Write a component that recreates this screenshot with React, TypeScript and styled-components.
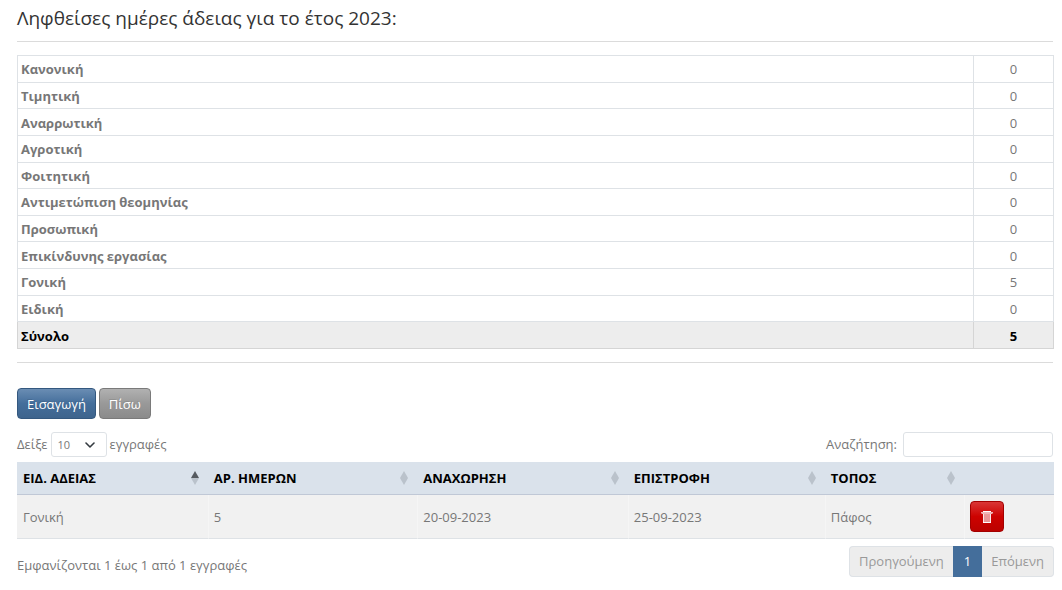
import React, { useState } from 'react';
import styled, { createGlobalStyle } from 'styled-components';

const GlobalStyle = createGlobalStyle`
  *, *::before, *::after { box-sizing: border-box; }
  body {
    margin: 0;
    background: #fff;
    color: #777;
    font: 13px/20px "Open Sans", "Noto Sans", sans-serif;
  }
  button, input, select { font: inherit; }
`;

const Page = styled.main`
  padding: 5px 8px 12px 17px;
`;

const Title = styled.h1`
  margin: 0;
  color: #333;
  font-size: 19px;
  font-weight: 400;
  line-height: 26px;
`;

const Divider = styled.hr<{ $top: number }>`
  margin: ${(p) => p.$top}px 1px 13px 0;
  border: 0;
  border-top: 1px solid #dbdbdb;
`;

const SummaryTable = styled.table`
  width: 100%;
  height: 294px;
  border-collapse: collapse;
`;

const SummaryRow = styled.tr<{ $total?: boolean }>`
  background: ${(p) => (p.$total ? '#ededed' : '#fff')};
  color: ${(p) => (p.$total ? '#000' : '#777')};
  font-weight: ${(p) => (p.$total ? 700 : 400)};

  th, td {
    padding: 4px 3px 3px;
    border: 1px solid ${(p) => (p.$total ? '#d5d5d5' : '#dee2e6')};
    line-height: 18px;
  }
  th { text-align: left; font-weight: 700; }
  td { width: 80px; text-align: center; }
`;

const Actions = styled.div`
  display: flex;
  gap: 3px;
  margin-top: 25px;
`;

const tones = {
  primary: { border: '#34587f', fill: 'linear-gradient(180deg, #6a8db3 0%, #446e9b 50%, #3e648d 100%)' },
  muted: { border: '#7a7a7a', fill: 'linear-gradient(180deg, #b1b1b1 0%, #999 50%, #8b8b8b 100%)' },
  danger: { border: '#a30000', fill: 'linear-gradient(180deg, #d93636 0%, #cd0200 50%, #bb0200 100%)' },
};

const Button = styled.button<{ $tone: keyof typeof tones; $icon?: boolean }>`
  display: inline-flex;
  align-items: center;
  justify-content: center;
  height: 31px;
  padding: 0 ${(p) => (p.$icon ? 10 : 9)}px;
  border: 1px solid ${(p) => tones[p.$tone].border};
  border-radius: 4px;
  background: ${(p) => tones[p.$tone].fill};
  color: #fff;
  text-shadow: -1px -1px 0 rgba(0, 0, 0, 0.1);
  cursor: pointer;
`;

const Controls = styled.div`
  display: flex;
  justify-content: space-between;
  margin: 13px 1px 5px 0;
`;

const ControlLabel = styled.label<{ $gap: number }>`
  display: flex;
  align-items: center;
  gap: ${(p) => p.$gap}px;
  line-height: 19px;
`;

const SelectWrap = styled.span`
  display: grid;
  align-items: center;
  justify-items: end;

  > * { grid-area: 1 / 1; }
  svg { margin-right: 12px; pointer-events: none; }
`;

const LengthSelect = styled.select`
  width: 56px;
  height: 25px;
  padding: 0 6px;
  border: 1px solid #dee2e6;
  border-radius: 3px;
  background: #fff;
  color: #777;
  font-size: 11px;
  appearance: none;
`;

const SearchInput = styled.input`
  width: 150px;
  height: 25px;
  padding: 0 7px;
  border: 1px solid #dee2e6;
  border-radius: 3px;
  color: #777;
`;

const DataTable = styled.table`
  width: 100%;
  border-collapse: separate;
  border-spacing: 0;
  table-layout: fixed;

  th {
    height: 33px;
    padding: 0 6px;
    border-bottom: 1px solid #c0c8d6;
    background: #dae2eb;
    color: #000;
    text-align: left;
  }
  td {
    height: 44px;
    padding: 0 6px;
    border-bottom: 1px solid #dee2e6;
    background: #f1f1f1;
  }
  td + td { border-left: 1px solid #f5f5f5; padding-left: 5px; }
`;

const HeadContent = styled.span`
  display: flex;
  align-items: center;
  justify-content: space-between;
  padding-right: 3px;
`;

const Footer = styled.div`
  display: flex;
  justify-content: space-between;
  margin-top: 7px;
`;

const Info = styled.div`
  padding-top: 9px;
`;

const Pagination = styled.nav`
  display: flex;
`;

const PageButton = styled.button<{ $active?: boolean }>`
  height: 31px;
  padding: 0 ${(p) => (p.$active ? 10 : 9)}px 2px;
  border: 1px solid ${(p) => (p.$active ? '#446e9b' : '#dee2e6')};
  background: ${(p) => (p.$active ? '#446e9b' : '#ededed')};
  color: ${(p) => (p.$active ? '#fff' : '#999')};

  &:first-child { border-right: 0; border-radius: 4px 0 0 4px; }
  &:last-child { border-left: 0; border-radius: 0 4px 4px 0; }
`;

const leaves: [string, number][] = [
  ['Κανονική', 0],
  ['Τιμητική', 0],
  ['Αναρρωτική', 0],
  ['Αγροτική', 0],
  ['Φοιτητική', 0],
  ['Αντιμετώπιση θεομηνίας', 0],
  ['Προσωπική', 0],
  ['Επικίνδυνης εργασίας', 0],
  ['Γονική', 5],
  ['Ειδική', 0],
];

const columns = [
  { label: 'ΕΙΔ. ΑΔΕΙΑΣ', width: '18.4%' },
  { label: 'ΑΡ. ΗΜΕΡΩΝ', width: '20.2%' },
  { label: 'ΑΝΑΧΩΡΗΣΗ', width: '20.3%' },
  { label: 'ΕΠΙΣΤΡΟΦΗ', width: '19%' },
  { label: 'ΤΟΠΟΣ', width: '13.4%' },
  { label: '', width: '8.7%' },
];

const SortIcon = ({ ascending }: { ascending: boolean }) => (
  <svg width="8" height="14" viewBox="0 0 8 14" aria-hidden="true">
    <path d="M4 0 8 7H0z" fill={ascending ? '#555a60' : '#bac2cb'} />
    <path d="M0 7h8l-4 7z" fill="#bac2cb" />
  </svg>
);

const Chevron = () => (
  <svg width="10" height="6" viewBox="0 0 10 6" fill="none" aria-hidden="true">
    <path d="m1 1 4 4 4-4" stroke="#343a40" strokeWidth="1.6" strokeLinecap="round" strokeLinejoin="round" />
  </svg>
);

const TrashIcon = () => (
  <svg width="12" height="14" viewBox="0 0 12 14" fill="none" aria-hidden="true">
    <path d="M3 4h6v8H3z" fill="#fff" fillOpacity=".6" />
    <path d="M0 2h12v1l-1 1H1L0 3z" fill="#fff" fillOpacity=".7" />
    <path d="M2 1h8v1H2z" fill="#fff" />
    <path d="M2.5 4v8.5M9.5 4v8.5" stroke="#fff" strokeOpacity=".9" />
    <path d="M2 12h8v1H2z" fill="#fff" />
  </svg>
);

export default function App() {
  const [search, setSearch] = useState('');

  return (
    <>
      <GlobalStyle />
      <Page>
        <Title>Ληφθείσες ημέρες άδειας για το έτος 2023:</Title>
        <Divider $top={10} />
        <SummaryTable>
          <tbody>
            {leaves.map(([name, days]) => (
              <SummaryRow key={name}>
                <th scope="row">{name}</th>
                <td>{days}</td>
              </SummaryRow>
            ))}
            <SummaryRow $total>
              <th scope="row">Σύνολο</th>
              <td>5</td>
            </SummaryRow>
          </tbody>
        </SummaryTable>
        <Divider $top={13} />
        <Actions>
          <Button type="button" $tone="primary">Εισαγωγή</Button>
          <Button type="button" $tone="muted">Πίσω</Button>
        </Actions>
        <Controls>
          <ControlLabel $gap={3}>
            Δείξε
            <SelectWrap>
              <LengthSelect defaultValue="10">
                <option>10</option>
                <option>25</option>
                <option>50</option>
              </LengthSelect>
              <Chevron />
            </SelectWrap>
            εγγραφές
          </ControlLabel>
          <ControlLabel $gap={6}>
            Αναζήτηση:
            <SearchInput type="search" value={search} onChange={(e) => setSearch(e.target.value)} />
          </ControlLabel>
        </Controls>
        <DataTable>
          <colgroup>
            {columns.map((c) => <col key={c.label} width={c.width} />)}
          </colgroup>
          <thead>
            <tr>
              {columns.map((c, i) => (
                <th key={c.label} scope="col">
                  {c.label && (
                    <HeadContent>
                      {c.label}
                      <SortIcon ascending={i === 0} />
                    </HeadContent>
                  )}
                </th>
              ))}
            </tr>
          </thead>
          <tbody>
            <tr>
              <td>Γονική</td>
              <td>5</td>
              <td>20-09-2023</td>
              <td>25-09-2023</td>
              <td>Πάφος</td>
              <td>
                <Button type="button" $tone="danger" $icon aria-label="Διαγραφή"><TrashIcon /></Button>
              </td>
            </tr>
          </tbody>
        </DataTable>
        <Footer>
          <Info>Εμφανίζονται 1 έως 1 από 1 εγγραφές</Info>
          <Pagination aria-label="Σελίδες">
            <PageButton type="button" disabled>Προηγούμενη</PageButton>
            <PageButton type="button" $active>1</PageButton>
            <PageButton type="button" disabled>Επόμενη</PageButton>
          </Pagination>
        </Footer>
      </Page>
    </>
  );
}
